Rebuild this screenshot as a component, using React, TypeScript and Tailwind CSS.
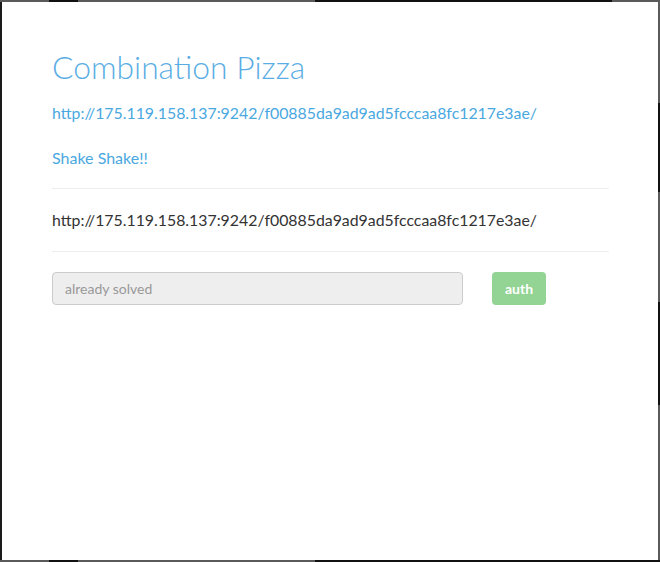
import React from "react";

const url = "http://175.119.158.137:9242/f00885da9ad9ad5fcccaa8fc1217e3ae/";

export default function App() {
  return (
    <div className="w-[660px] h-[562px] flex flex-col bg-white overflow-hidden" style={{ fontFamily: "Lato, 'Open Sans', sans-serif" }}>
      {/* top border */}
      <div className="flex h-[2px] shrink-0">
        <div className="w-[49px] bg-[#5a5a5a]" />
        <div className="w-[29px] bg-[#111111]" />
        <div className="w-[237px] bg-[#5a5a5a]" />
        <div className="w-[297px] bg-[#111111]" />
        <div className="flex-1 bg-[#5a5a5a]" />
      </div>
      <div className="flex flex-1 min-h-0">
        <div className="w-[2px] bg-[#1a1a1a] shrink-0" />
        <div className="flex-1 bg-white pl-[50px] pr-[49px] pt-[48px]">
          <h2 className="text-[31.8px] leading-[35px] font-light text-[#5aade4]">Combination Pizza</h2>
          <p className="mt-[17px] text-[15.85px] leading-[22px] text-[#4aa8e0]">{url}</p>
          <p className="mt-[23px] text-[16px] leading-[22px] text-[#4aa8e0]">Shake Shake!!</p>
          <hr className="mt-[19px] border-0 border-t border-[#eeeeee]" />
          <p className="mt-[20px] text-[15.85px] leading-[22px] text-[#333333]">{url}</p>
          <hr className="mt-[20px] border-0 border-t border-[#eeeeee]" />
          <div className="mt-[20px] flex items-center">
            <div className="w-[411px] h-[33px] rounded-[4px] border border-[#cccccc] bg-[#eeeeee] flex items-center px-[12px] text-[14px] text-[#999999]">
              already solved
            </div>
            <div className="ml-[29px] w-[54px] h-[33px] rounded-[4px] bg-[#93d394] flex items-center justify-center text-[14px] font-bold text-white">
              auth
            </div>
          </div>
        </div>
        <div className="w-[2px] shrink-0 flex flex-col">
          <div className="h-[101px] bg-[#5a5a5a]" />
          <div className="h-[89px] bg-[#111111]" />
          <div className="h-[110px] bg-[#5a5a5a]" />
          <div className="h-[103px] bg-[#111111]" />
          <div className="flex-1 bg-[#5a5a5a]" />
        </div>
      </div>
      <div className="flex h-[2px] shrink-0">
        <div className="w-[49px] bg-[#5a5a5a]" />
        <div className="w-[29px] bg-[#111111]" />
        <div className="w-[237px] bg-[#5a5a5a]" />
        <div className="flex-1 bg-[#111111]" />
      </div>
    </div>
  );
}
